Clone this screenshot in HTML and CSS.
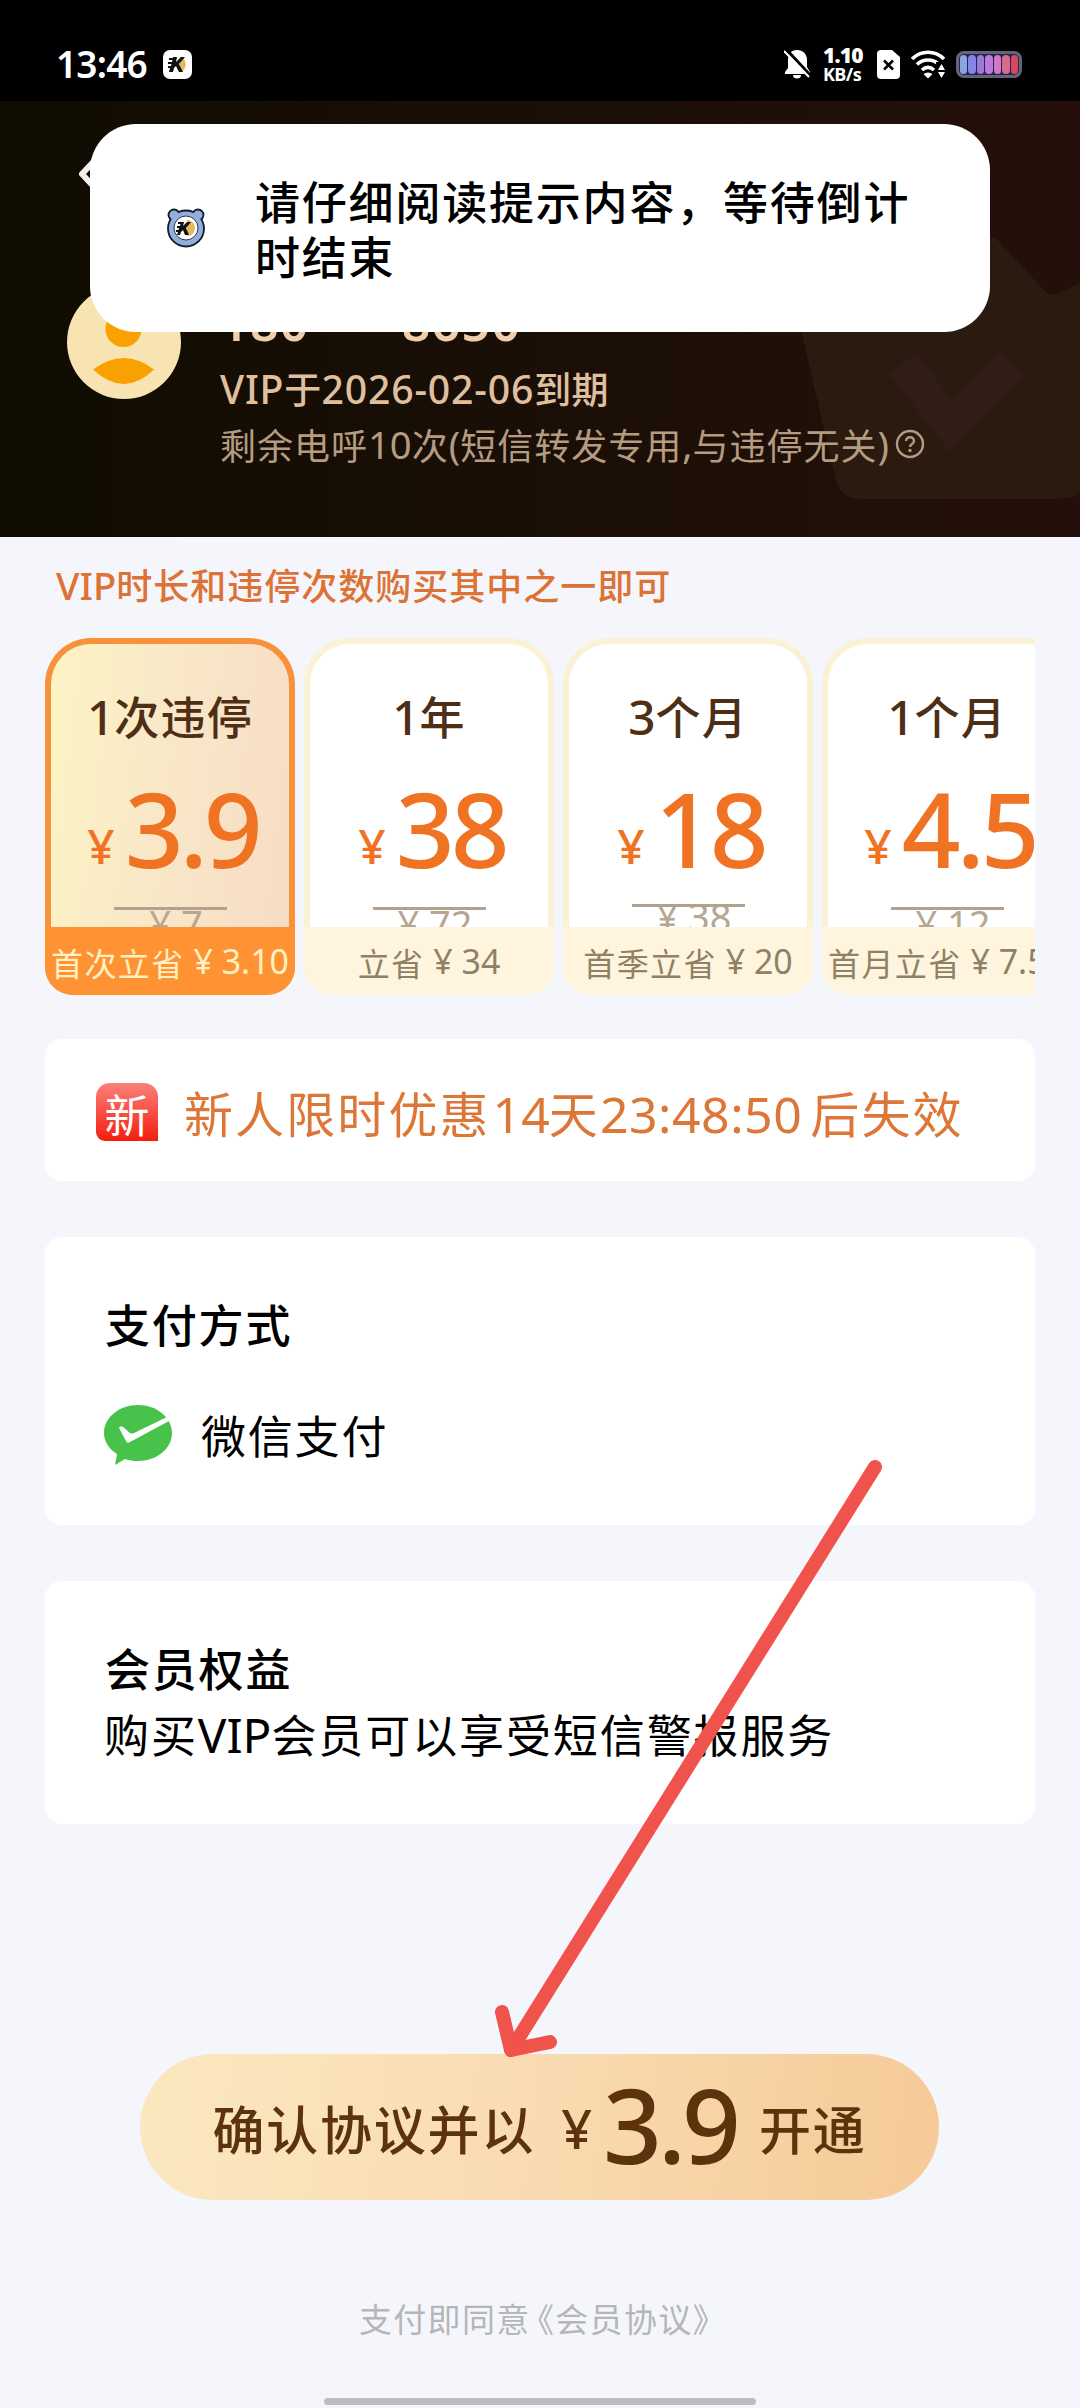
FILE: index.html
```html
<!DOCTYPE html>
<html lang="zh-CN">
<head>
<meta charset="utf-8">
<title>会员开通</title>
<link rel="stylesheet" href="styles.css">
</head>
<body>
<div class="screen">
  <div class="status">
    <span class="clock">13:46</span>
    <svg class="app-badge" width="29" height="29" viewBox="0 0 29 29"><rect width="29" height="29" rx="7" fill="#fff"/><path d="M17 6.500a8.500 8.500 0 0 1 0 16z" fill="#e5b85c"/><path d="M10 7h4l-1 5 5-5h4l-6 7 4 8h-4l-3-6-2 2-1 4H6l1-4H5v-2h3l.5-2H5v-2h4l.5-2H6V8h4z" fill="#111"/></svg>
    <div class="status-right">
      <svg class="bell" width="26" height="30" viewBox="0 0 26 30"><path d="M13 1c6 0 10 4 10 10v7l3 5v2H1v-2l3-4v-8C4 5 7 1 13 1z" fill="#fff"/><path d="M9 26h8a4 3.500 0 0 1-8 0z" fill="#fff"/><path d="M1 -1l26 28" stroke="#000" stroke-width="3"/><path d="M0 2l25 26" stroke="#fff" stroke-width="2"/></svg>
      <span class="speed"><b>1.10</b><i>KB/s</i></span>
      <svg class="sim" width="23" height="29" viewBox="0 0 23 29"><path d="M4 0h11l8 7v18a4 4 0 0 1-4 4H4a4 4 0 0 1-4-4V4a4 4 0 0 1 4-4z" fill="#fff"/><path d="M7 10.500l9 9m0-9l-9 9" stroke="#000" stroke-width="2.500"/></svg>
      <svg class="wifi" width="35" height="29" viewBox="0 0 35 29"><g fill="none" stroke="#fff" stroke-width="3.600"><path d="M1 9c9-9 23-9 32 0"/><path d="M6 14.500c6-6 16-6 22 0"/><path d="M11 20c4-3.500 8-3.500 12 0"/></g><path d="M12.500 24c3-2 6-2 9 0L17 28.500z" fill="#fff"/><path d="M25 12h10v17h-9z" fill="#000"/><path d="M27 20l3.500-6 3.500 6zM27 22h7l-3.500 6z" fill="#fff"/></svg>
      <span class="battery"><u></u><u></u><u></u><u></u><u></u><u></u><u></u></span>
    </div>
  </div>

  <header class="hero">
    <svg class="hero-mark" width="285" height="300" viewBox="0 0 285 300"><path d="M0 104q28-20 100-35L200 37l50 54q6 6 14 2l21-10v209q-5 6-20 7H68q-24 0-28-22z" fill="#2b1a10"/><path d="M108 164l48 62 60-62" fill="none" stroke="#301d17" stroke-width="34"/></svg>
    <svg class="back" width="24" height="40" viewBox="0 0 24 40"><path d="M18 5L4 20l14 15" fill="none" stroke="#f7efef" stroke-width="6" stroke-linejoin="round"/></svg>
    <div class="user">
      <svg class="avatar" width="114" height="114" viewBox="0 0 114 114"><circle cx="57" cy="57" r="57" fill="#f8e4b2"/><circle cx="56.500" cy="44" r="18" fill="#f9a100"/><path d="M26 84.500q31-23 61 0q-30 29-61 0z" fill="#f9a100"/></svg>
      <div class="user-info">
        <div class="phone">180<span class="stars">****</span>8650</div>
        <div class="expire"><span class="n">VIP</span>于<span class="n">2026-02-06</span>到期</div>
        <div class="left">剩余电呼<span class="n">10</span>次<span class="n">(</span>短信转发专用<span class="n">,</span>与违停无关<span class="n">)</span><svg class="help" width="30" height="30" viewBox="0 0 30 30"><circle cx="15" cy="15" r="13" fill="none" stroke="#b59c80" stroke-width="2.400"/><path d="M11 12c0-5 8-5 8 0 0 3-4 3-4 6" fill="none" stroke="#b59c80" stroke-width="2.400"/><circle cx="15" cy="21.500" r="1.700" fill="#b59c80"/></svg></div>
      </div>
    </div>
  </header>

  <div class="toast">
    <svg class="bear" width="40" height="40" viewBox="0 0 40 40"><g fill="#93aedb" stroke="#111a2c" stroke-width="1.800"><circle cx="8" cy="7" r="5.500"/><circle cx="32" cy="7" r="5.500"/><circle cx="20" cy="20.500" r="18"/></g><g fill="#93aedb"><circle cx="9" cy="8" r="4.500"/><circle cx="31" cy="8" r="4.500"/></g><circle cx="20" cy="20" r="12" fill="#fff" stroke="#26344f"/><path d="M21 12a8 8 0 0 1 0 16z" fill="#e5b85c"/><path d="M15 14h3l-1 4 4-4h4l-5 6 3 7h-4l-2-5-2 2-1 3h-3l1-3h-2v-2h2.500l.5-2H11v-2h3l.5-2H12v-2h3z" fill="#111"/></svg>
    <p class="toast-text">请仔细阅读提示内容，等待倒计时结束</p>
  </div>

  <main class="content">
    <p class="hint"><span class="n">VIP</span>时长和违停次数购买其中之一即可</p>

    <div class="plans">
      <section class="plan active">
        <div class="plan-body">
          <h3><span class="n">1</span>次违停</h3>
          <div class="price"><span class="yen">¥</span><span class="amount">3.9</span></div>
          <div class="old"><span>¥ 7</span></div>
        </div>
        <div class="save">首次立省<span class="n"> ¥ 3.10</span></div>
      </section>
      <section class="plan">
        <div class="plan-body">
          <h3><span class="n">1</span>年</h3>
          <div class="price"><span class="yen">¥</span><span class="amount">38</span></div>
          <div class="old"><span>¥ 72</span></div>
        </div>
        <div class="save">立省<span class="n"> ¥ 34</span></div>
      </section>
      <section class="plan">
        <div class="plan-body">
          <h3><span class="n">3</span>个月</h3>
          <div class="price"><span class="yen">¥</span><span class="amount">18</span></div>
          <div class="old raised"><span>¥ 38</span></div>
        </div>
        <div class="save">首季立省<span class="n"> ¥ 20</span></div>
      </section>
      <section class="plan">
        <div class="plan-body">
          <h3><span class="n">1</span>个月</h3>
          <div class="price"><span class="yen">¥</span><span class="amount">4.5</span></div>
          <div class="old"><span>¥ 12</span></div>
        </div>
        <div class="save">首月立省<span class="n"> ¥ 7.50</span></div>
      </section>
    </div>

    <section class="card promo">
      <span class="new">新</span>
      <p>新人限时优惠<span class="n count">14</span>天<span class="n timer">23:48:50</span>后失效</p>
    </section>

    <section class="card pay">
      <h2>支付方式</h2>
      <div class="method">
        <svg width="68" height="60" viewBox="0 0 68 60"><path d="M34 0c19 0 34 12.500 34 28S53 56 34 56c-5 0-9-.6-13-2L11 60l2-11C5 44 0 36.500 0 28 0 12.500 15 0 34 0z" fill="#47c34b"/><path d="M15 23q2-3 4-1l7 6q2 1 4 0L63 12l2 4L26 37q-3 2-4-1z" fill="#fff"/></svg>
        <span>微信支付</span>
      </div>
    </section>

    <section class="card benefits">
      <h2>会员权益</h2>
      <p>购买<span class="n">VIP</span>会员可以享受短信警报服务</p>
    </section>
  </main>

  <button class="confirm"><span>确认协议并以</span><span class="yen">¥</span><span class="amount">3.9</span><span>开通</span></button>
  <p class="terms">支付即同意<span class="open">《</span>会员协议<span>》</span></p>
  <div class="home-bar"></div>

  <svg class="arrow" width="1080" height="2408" viewBox="0 0 1080 2408"><g fill="none" stroke="#f0524c" stroke-width="14" stroke-linecap="round" stroke-linejoin="round"><path d="M875 1467L511 2050"/><path d="M502 2012L511 2050L550 2042"/></g></svg>
</div>
</body>
</html>
```
FILE: styles.css
```css
* { box-sizing: border-box; margin: 0; padding: 0; }
body { background: #f5f6fb; font-family: "Noto Sans CJK SC", sans-serif; color: #000; }
.screen { position: relative; width: 1080px; height: 2408px; overflow: hidden; display: flex; flex-direction: column; white-space: nowrap; }
.screen svg { display: block; flex: none; }
.n, .clock, .phone, .yen, .amount, .old { font-family: "Noto Sans", "Noto Sans CJK SC", sans-serif; }
.n { font-size: 1.06em; line-height: 1; letter-spacing: 0; white-space: pre; }

.status { height: 101px; background: #000; color: #fff; display: flex; align-items: center; padding: 27px 58px 0 56px; flex: none; }
.clock { font-size: 37px; font-weight: 600; line-height: 40px; width: 107px; letter-spacing: -.8px; }
.status-right { margin-left: auto; display: flex; align-items: center; }
.speed { font-family: "Open Sans", sans-serif; font-weight: 700; width: 39px; margin: 0 15px 0 13px; display: flex; flex-direction: column; line-height: 19px; }
.speed b { font-size: 21px; line-height: 20px; letter-spacing: -.8px; }
.speed i { font-size: 18px; font-style: normal; letter-spacing: -.6px; }
.wifi { margin: 0 10px 0 11px; }
.battery { width: 66px; height: 27px; border-radius: 8px; border: 3px solid #62637d; background: #252744; padding: 1px; display: flex; gap: 1px; }
.battery u { flex: 1; border-radius: 4px; background: #8ba4dc; }
.battery u:nth-child(2) { background: #8585e9; }
.battery u:nth-child(3) { background: #9a78dd; }
.battery u:nth-child(4) { background: #c078dc; }
.battery u:nth-child(5) { background: #d277c8; }
.battery u:nth-child(6) { background: #d66b8b; }
.battery u:nth-child(7) { background: #da4763; }

.hero { position: relative; height: 436px; flex: none; background: linear-gradient(90deg, #100c02 0%, #1a0f07 50%, #240f0b 100%); }
.hero-mark { position: absolute; right: 0; top: 99px; }
.back { position: absolute; left: 78px; top: 53px; }
.user { position: relative; display: flex; padding: 184px 0 0 67px; }
.user-info { margin-left: 39px; }
.phone { font-size: 50px; font-weight: 600; color: #f0ceac; line-height: 60px; height: 75px; padding-top: 7px; letter-spacing: 1.3px; }
.stars { display: inline-block; width: 92px; letter-spacing: -4px; }
.expire { font-size: 37px; font-weight: 500; color: #dfbf9e; line-height: 56px; letter-spacing: .2px; }
.expire .n { letter-spacing: .8px; }
.left { font-size: 36px; letter-spacing: 1px; color: #b59c80; line-height: 56px; display: flex; align-items: center; }
.help { margin-left: 6px; }

.toast { position: absolute; left: 90px; top: 124px; width: 900px; height: 208px; border-radius: 46px; background: #fff; display: flex; align-items: center; padding: 0 70px 0 76px; }
.toast-text { margin-left: 49px; flex: 1; font-size: 45px; letter-spacing: 1.8px; font-weight: 500; line-height: 55px; white-space: normal; line-break: anywhere; }

.content { padding: 23px 45px 0; display: flex; flex-direction: column; }
.hint { font-size: 36px; letter-spacing: 1px; color: #dd7236; font-weight: 500; padding-left: 11px; height: 78px; line-height: 49px; }
.plans { display: flex; gap: 9px; overflow: hidden; height: 357px; }
.plan { width: 250px; flex: none; border-radius: 46px 46px 28px 28px; background: #fbf1d4; overflow: hidden; display: flex; flex-direction: column; }
.plan-body { margin: 6px 6px 0; height: 283px; overflow: hidden; background: #fff; border-radius: 40px 40px 0 0; display: flex; flex-direction: column; align-items: center; }
.plan h3 { margin-top: 42px; font-size: 45px; line-height: 60px; letter-spacing: 1.2px; font-weight: 500; color: #4e2e14; }
.price { display: flex; align-items: center; margin-top: 27px; padding-left: 6px; color: #f07324; line-height: 110px; height: 110px; }
.yen { font-size: 48px; margin-right: 10px; }
.price .yen { padding-top: 36px; font-weight: 500; }
.amount { font-size: 103px; font-weight: 500; letter-spacing: -4px; }
.old { position: relative; width: 113px; text-align: center; padding-left: 12px; margin-top: 17px; font-size: 38px; line-height: 46px; color: #b5a791; }
.old::after { content: ""; position: absolute; left: 0; top: 7px; width: 113px; height: 3px; background: #b1a28d; }
.raised { margin-top: 10px; }
.raised::after { top: 11px; }
.save { height: 68px; display: flex; align-items: center; justify-content: center; padding-top: 2px; background: #fff5de; color: #8f8165; font-size: 32px; letter-spacing: 1.4px; line-height: 60px; }
.active { background: #f7923a; }
.active .plan-body { background: linear-gradient(97deg, #fcf4c5 0%, #f9e7c8 50%, #f7dcc5 100%); }
.active .save { background: #ff9333; color: #fff1c4; }

.card { background: #fff; border-radius: 17px; }
.promo { margin-top: 44px; height: 142px; display: flex; align-items: center; padding: 3px 0 0 51px; color: #dd7738; font-size: 49px; letter-spacing: 2.1px; }
.new { width: 62px; height: 58px; border-radius: 14px 14px 0 9px; background: linear-gradient(#fb817b, #f41d0d); color: #fff; font-size: 45px; line-height: 62px; letter-spacing: 0; text-align: center; overflow: hidden; }
.promo p { margin-left: 26px; line-height: 70px; }
.promo .n { font-size: 50px; }
.count { margin-left: 2px; margin-right: -1px; }
.promo .timer { margin: 0 8px 0 0; letter-spacing: .5px; }
.pay { margin-top: 56px; height: 288px; padding: 54px 59px; }
.card h2 { font-size: 45px; letter-spacing: 1.8px; font-weight: 500; line-height: 66px; padding-left: 1px; }
.method { display: flex; align-items: center; margin-top: 45px; font-size: 45px; letter-spacing: 1.8px; line-height: 66px; gap: 29px; }
.benefits { margin-top: 56px; height: 243px; padding: 54px 59px; }
.benefits p { font-size: 45px; letter-spacing: 1.9px; line-height: 66px; }

.confirm { align-self: flex-start; margin: 230px 0 0 140px; width: 799px; height: 146px; flex: none; border: 0; border-radius: 73px; background: linear-gradient(97deg, #fbe8bf 0%, #fadcb3 45%, #f5ca97 100%); color: #5c330d; font: 500 52px "Noto Sans CJK SC", sans-serif; letter-spacing: 1.8px; display: flex; align-items: center; justify-content: center; line-height: 146px; padding-top: 1px; }
.confirm .yen { font-size: 54px; margin: 0 11px 0 26px; letter-spacing: 0; }
.confirm .amount { margin: -7px 22px 0 0; }
.terms { margin-top: 95px; padding-left: 359px; color: #b5b6ba; font-size: 33px; letter-spacing: 1.3px; line-height: 46px; }
.open { margin-left: 7px; font-feature-settings: "halt"; }
.home-bar { margin: 57px 0 0 324px; width: 432px; height: 7px; border-radius: 4px; background: #bcbdc1; flex: none; }
.arrow { position: absolute; left: 0; top: 0; }
```
